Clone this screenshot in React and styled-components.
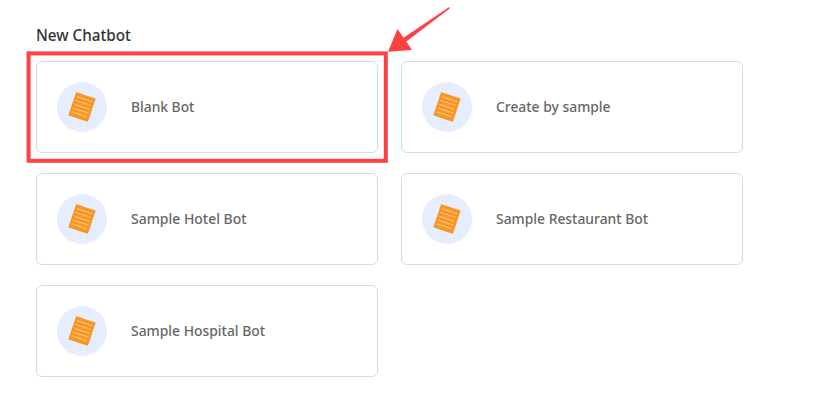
import React from "react";
import styled, { createGlobalStyle } from "styled-components";

const GlobalStyle = createGlobalStyle`
  * { box-sizing: border-box; }
  body {
    margin: 0;
    background: #fff;
    font-family: "Noto Sans", "Open Sans", sans-serif;
    overflow: hidden;
  }
`;

const Page = styled.main`
  position: relative;
  height: 407px;
  padding: 25px 36px 0;
`;

const Title = styled.h1`
  width: max-content;
  height: 20px;
  margin: 0 0 16px;
  color: #333;
  font-size: 16px;
  font-weight: 500;
  line-height: 20px;
  transform: scaleX(${(p) => p.$stretch});
  transform-origin: left;
`;

const Grid = styled.div`
  display: grid;
  grid-template-columns: repeat(2, 342px);
  grid-auto-rows: 92px;
  gap: 20px 23px;
`;

const Card = styled.button`
  display: flex;
  align-items: center;
  gap: 24px;
  padding: 0 20px;
  border: 1px solid #d9dadb;
  border-radius: 6px;
  background: #fff;
  font-family: inherit;
  text-align: left;
`;

const IconCircle = styled.span`
  display: block;
  flex: none;
  width: 50px;
  height: 50px;
  border-radius: 50%;
  background: #e6edfe;

  svg { display: block; }
`;

const Label = styled.span`
  padding-bottom: 2px;
  color: #666;
  font-size: 15px;
  font-weight: 500;
  line-height: 20px;
  white-space: nowrap;
  transform: scaleX(${(p) => p.$stretch});
  transform-origin: left;
`;

const Highlight = styled.svg`
  position: absolute;
  left: 24px;
  top: 49px;
`;

const Arrow = styled.svg`
  position: absolute;
  left: 380px;
  top: 0;
`;

const bots = [
  { name: "Blank Bot", stretch: 0.92 },
  { name: "Create by sample", stretch: 0.925 },
  { name: "Sample Hotel Bot", stretch: 0.93 },
  { name: "Sample Restaurant Bot", stretch: 0.925 },
  { name: "Sample Hospital Bot", stretch: 0.925 },
];

const NoteIcon = () => (
  <svg width="50" height="50" viewBox="0 0 50 50" aria-hidden="true">
    <g transform="rotate(18.5 25 25)">
      <rect x="14.7" y="12.7" width="20.6" height="24.6" rx="0.4" fill="#fa9522" />
      <path
        d="M17 16.8h16M17 20.8h16M17 24.8h16M17 28.8h16M17 32.8h16"
        stroke="#fbc183"
        strokeWidth="1.2"
      />
    </g>
  </svg>
);

export default function App() {
  return (
    <Page>
      <GlobalStyle />
      <Title $stretch={0.953}>New Chatbot</Title>
      <Grid>
        {bots.map((bot) => (
          <Card key={bot.name} type="button">
            <IconCircle><NoteIcon /></IconCircle>
            <Label $stretch={bot.stretch}>{bot.name}</Label>
          </Card>
        ))}
      </Grid>
      <Highlight width="368" height="118" viewBox="0 0 368 118" aria-hidden="true">
        <rect x="4.6" y="4.4" width="357.2" height="107.4" fill="none" stroke="#fe4241" strokeWidth="4" />
      </Highlight>
      <Arrow width="80" height="60" viewBox="0 0 80 60" aria-hidden="true">
        <path d="M8 51.7 17.5 29 23.5 37.7 69.2 7 70 8.2 26.3 41.5 32 50Z" fill="#fe4241" />
      </Arrow>
    </Page>
  );
}
